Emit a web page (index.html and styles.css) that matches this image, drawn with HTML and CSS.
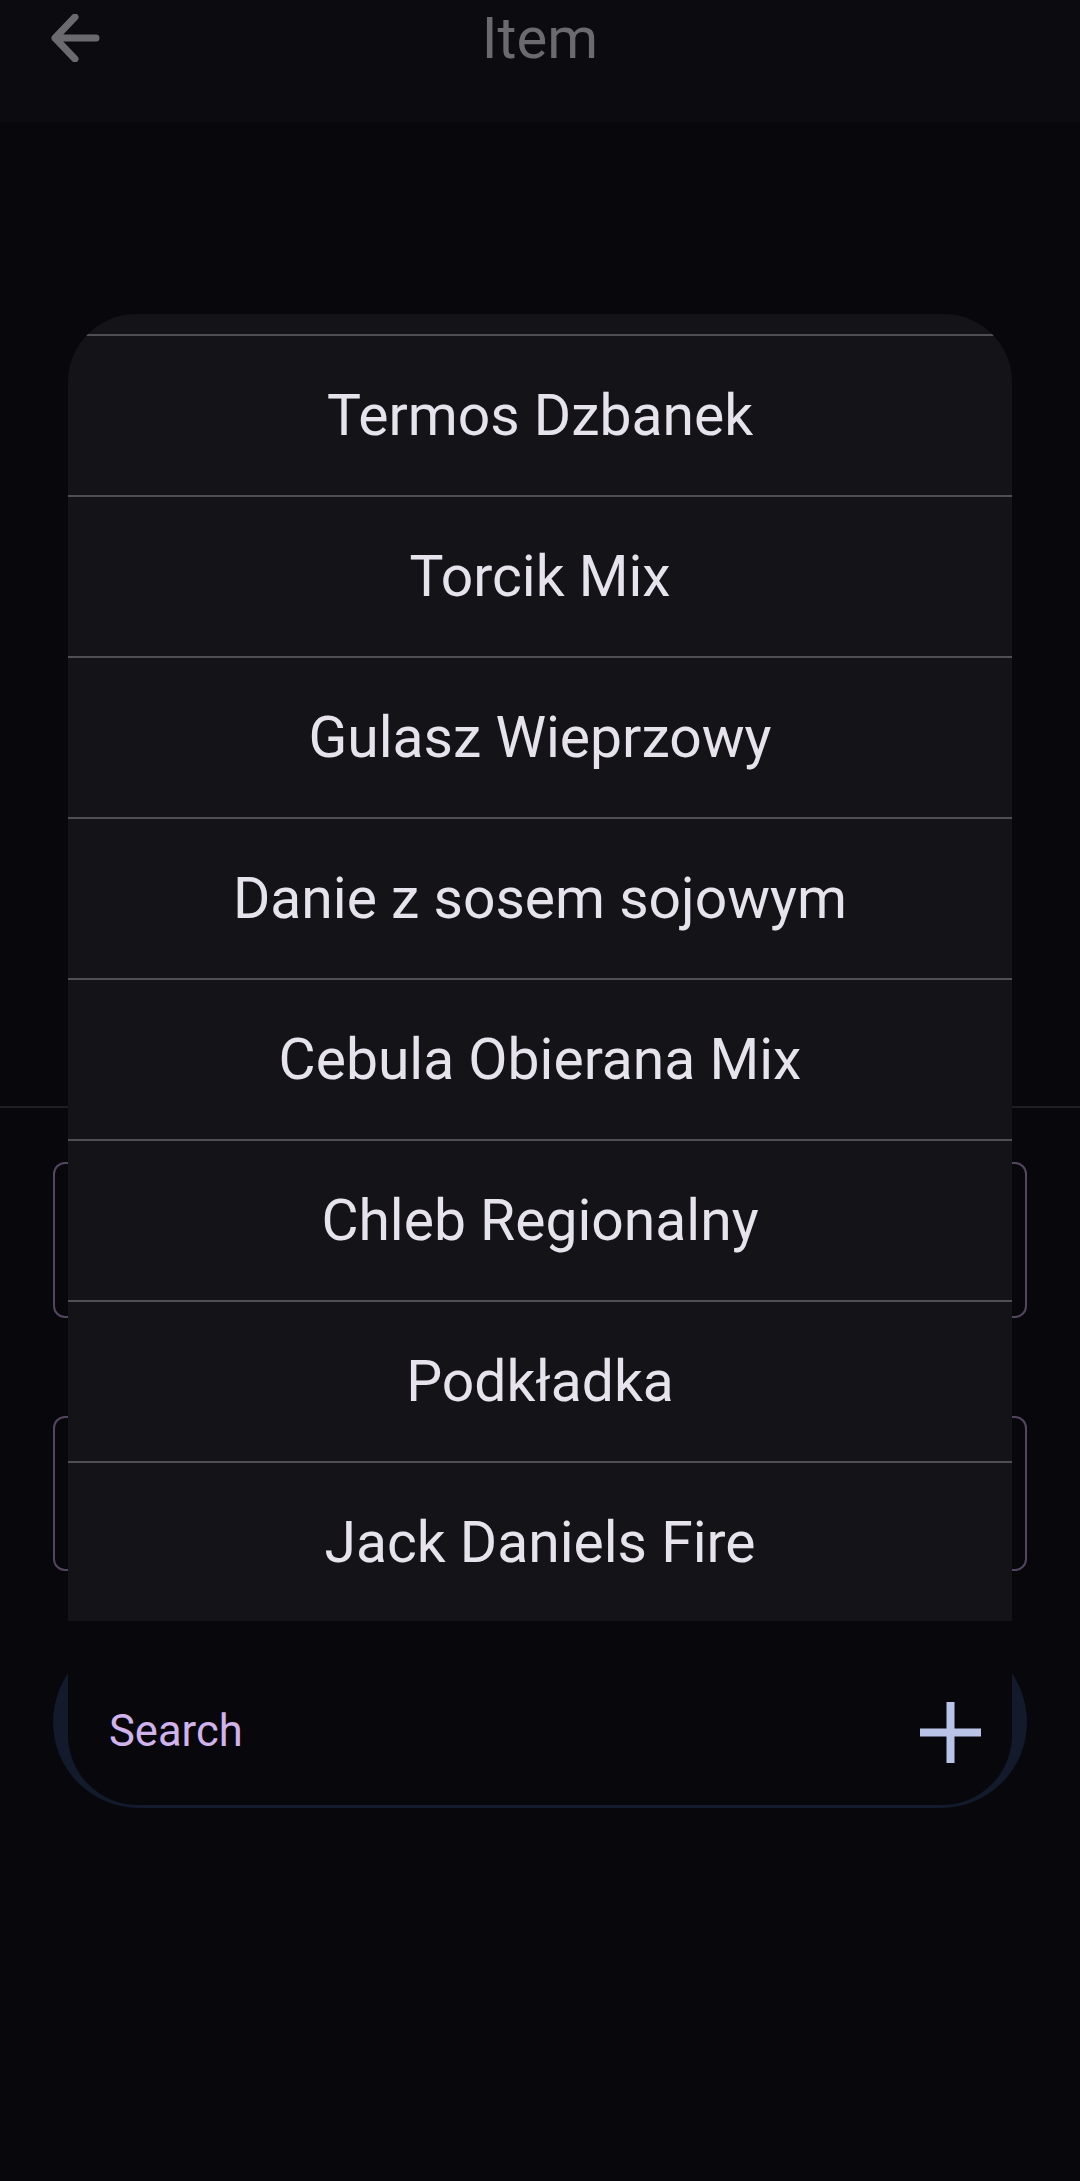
FILE: index.html
```html
<!DOCTYPE html>
<html lang="pl">
<head>
<meta charset="utf-8">
<title>Item</title>
<link rel="stylesheet" href="styles.css">
</head>
<body>
<div class="page">
  <header class="topbar">
    <svg class="back" width="50" height="48" viewBox="0 0 50 48" aria-hidden="true">
      <path d="M46 24 H5 M25 3 L5 24 L25 45" fill="none" stroke="#6a6a6f" stroke-width="7" stroke-linecap="round" stroke-linejoin="round"/>
    </svg>
    <h1 class="title">Item</h1>
  </header>

  <main class="content">
    <div class="rule"></div>
    <div class="field"></div>
    <div class="field field-second"></div>
    <div class="search-pill"></div>
  </main>

  <section class="sheet">
    <div class="list">
      <div class="list-lead"></div>
      <div class="row">Termos Dzbanek</div>
      <div class="row">Torcik Mix</div>
      <div class="row">Gulasz Wieprzowy</div>
      <div class="row">Danie z sosem sojowym</div>
      <div class="row">Cebula Obierana Mix</div>
      <div class="row">Chleb Regionalny</div>
      <div class="row">Podkładka</div>
      <div class="row">Jack Daniels Fire</div>
    </div>
    <div class="search">
      <span class="search-label">Search</span>
      <svg class="plus" width="61" height="61" viewBox="0 0 61 61" aria-hidden="true">
        <rect x="26.5" y="0" width="8" height="61" fill="#b9c3e7"/>
        <rect x="0" y="26.5" width="61" height="8" fill="#b9c3e7"/>
      </svg>
    </div>
  </section>
</div>
</body>
</html>
```
FILE: styles.css
```css
* {
  box-sizing: border-box;
}

html, body {
  margin: 0;
  padding: 0;
  background: #08080c;
}

body {
  font-family: Roboto, "Noto Sans", "Liberation Sans", sans-serif;
  width: 1080px;
  height: 2181px;
  overflow: hidden;
}

.page {
  position: relative;
  width: 1080px;
  height: 2181px;
  background: #08080c;
}

.topbar {
  height: 122px;
  background: #0c0c10;
  display: flex;
  align-items: flex-start;
  position: relative;
}

.back {
  position: absolute;
  left: 50px;
  top: 14px;
}

.title {
  margin: 0;
  width: 100%;
  padding-top: 4px;
  text-align: center;
  font-size: 58px;
  line-height: 68px;
  font-weight: 400;
  color: #6a6a6f;
}

.content {
  display: flex;
  flex-direction: column;
  padding-top: 984px;
}

.rule {
  height: 2px;
  background: #1f1f23;
}

.field {
  margin: 54px 53px 0;
  height: 156px;
  border: 2px solid #53455f;
  border-radius: 12px;
}

.field-second {
  margin-top: 98px;
  height: 155px;
}

.search-pill {
  margin: 65px 53px 0;
  height: 172px;
  border-radius: 86px;
  background: #121a2c;
}

.sheet {
  position: absolute;
  left: 68px;
  top: 314px;
  width: 944px;
  display: flex;
  flex-direction: column;
}

.list {
  background: #131318;
  border-radius: 68px 68px 0 0;
  overflow: hidden;
  height: 1307px;
}

.list-lead {
  height: 20px;
}

.row {
  height: 161px;
  border-top: 2px solid #4e4e53;
  text-align: center;
  font-size: 57px;
  line-height: 159px;
  color: #e6e3ec;
  white-space: nowrap;
}

.search {
  height: 184px;
  background: #08080c;
  border-radius: 0 0 70px 70px;
  display: flex;
  align-items: center;
  justify-content: space-between;
  padding: 38px 31px 0 41px;
}

.search-label {
  font-size: 43.5px;
  line-height: 44px;
  color: #d1b3ec;
}

.plus {
  display: block;
}
```
